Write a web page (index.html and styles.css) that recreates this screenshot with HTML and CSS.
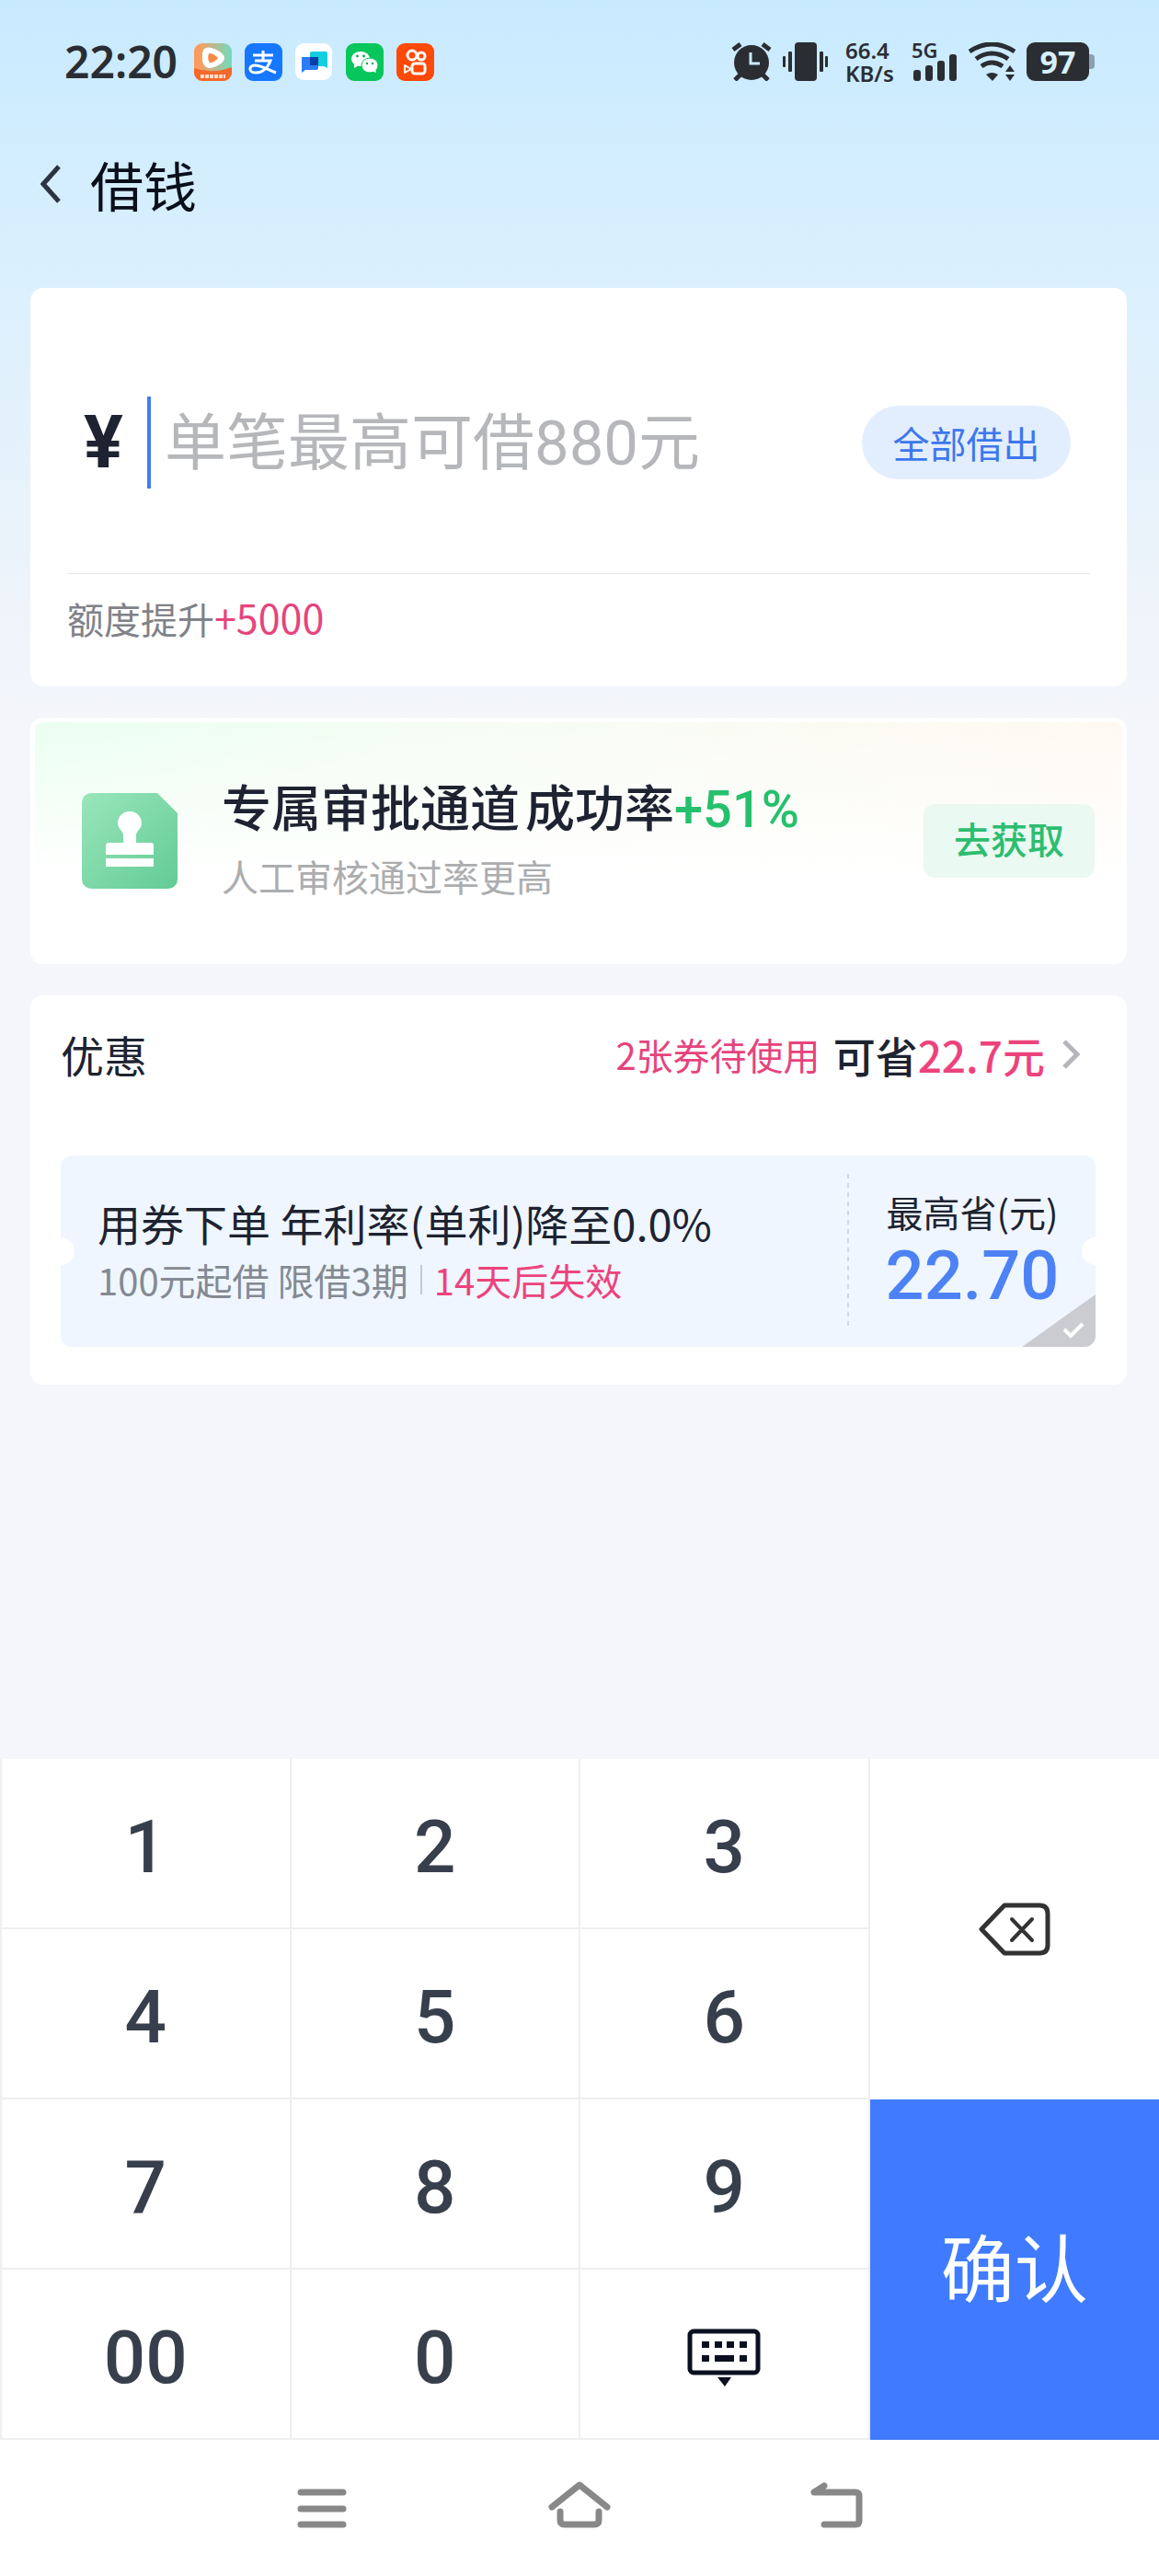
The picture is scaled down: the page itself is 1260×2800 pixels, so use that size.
FILE: index.html
```html
<!DOCTYPE html>
<html lang="zh-CN">
<head>
  <meta charset="UTF-8" />
  <meta name="viewport" content="width=device-width, initial-scale=1" />
  <title>借钱</title>
  <link rel="stylesheet" href="styles.css">
</head>
<body>

  <!-- 状态栏 -->
  <div class="status-bar">
    <div class="status-left">
      <span class="clock">22:20</span>
      <svg class="app-icon" viewBox="0 0 41 41">
        <defs>
          <linearGradient id="video" x1="0" y1="0" x2="1" y2="0">
            <stop offset="0.1" stop-color="#ff9a5c" />
            <stop offset="1" stop-color="#6fdcc0" />
          </linearGradient>
        </defs>
        <rect width="41" height="41" rx="9" fill="url(#video)" />
        <path d="M0 27Q20 34 41 26V32a9 9 0 0 1-9 9H9a9 9 0 0 1-9-9z" fill="#f4682c" />
        <path d="M11 6Q15 3 22 6Q33 11 33 16Q33 21 24 25Q16 29 12 25Q8 21 9 13Q9 8 11 6z" fill="#fff" />
        <path d="M16 11q5 0 9 4 2 2-1 3-4 4-7 3-3-4-1-10z" fill="#f98a45" />
        <path d="M7 36h27" stroke="#ffe0cc" stroke-width="4" stroke-dasharray="4 1" />
      </svg>
      <svg class="app-icon" viewBox="0 0 41 41">
        <rect width="41" height="41" rx="9" fill="#1677ff" />
        <path d="M20 8v11M9 13h22M11 19h17c-3 8-9 13-16 13-8 0-8-8-1-8 7 0 14 5 23 8" fill="none" stroke="#fff" stroke-width="3" />
      </svg>
      <svg class="app-icon" viewBox="0 0 41 41">
        <rect width="40" height="40" rx="9" fill="#fff" />
        <path d="M16 11q0-2 2-2h15q2 0 2 2v16l-4-2H16z" fill="#12cfe0" />
        <path d="M7 15h18v12q0 2-2 2H11l-4 3z" fill="#2d7bf5" />
        <path d="M16 15h9v9h-9z" fill="#0b3fa8" />
      </svg>
      <svg class="app-icon" viewBox="0 0 41 41">
        <rect width="41" height="41" rx="9" fill="#07c65b" />
        <ellipse cx="16" cy="17" rx="10" ry="8" fill="#fff" />
        <path d="M9 22v5l5-3z" fill="#fff" />
        <ellipse cx="26" cy="24" rx="9" ry="8" fill="#fff" stroke="#07c65b" stroke-width="1" />
        <path d="M28 30l5 2-1-4z" fill="#fff" />
        <g fill="#07a94d">
          <circle cx="12.500" cy="14" r="1.400" /><circle cx="19.500" cy="14" r="1.400" />
          <circle cx="23" cy="22" r="1.200" /><circle cx="29" cy="22" r="1.200" />
        </g>
      </svg>
      <svg class="app-icon" viewBox="0 0 41 41">
        <rect width="41" height="41" rx="9" fill="#ff4906" />
        <g fill="none" stroke="#fff" stroke-width="3">
          <circle cx="17" cy="13" r="5" />
          <circle cx="27" cy="14" r="4" />
          <rect x="17" y="22" width="14" height="11" rx="3" />
          <path d="M9 24v8l7-4z" stroke-width="2" stroke-linejoin="round" />
        </g>
      </svg>
    </div>

    <div class="status-right">
      <svg width="44" height="42" viewBox="0 0 44 42">
        <circle cx="22" cy="22" r="19" fill="#2a2e33" />
        <path d="M2 8l8-6M42 8l-8-6M4 41l7-7M40 41l-7-7" stroke="#2a2e33" stroke-width="5" />
        <path d="M21 11v12h10" fill="none" stroke="#cbeafe" stroke-width="3" />
      </svg>
      <svg class="vibrate" width="50" height="42" viewBox="0 0 50 42" fill="#2a2e33">
        <rect x="13" width="24" height="42" rx="4" />
        <rect x="0" y="15" width="3" height="12" rx="1" />
        <rect x="6" y="10" width="4" height="22" rx="1" />
        <rect x="40" y="10" width="4" height="22" rx="1" />
        <rect x="46" y="15" width="3" height="12" rx="1" />
      </svg>
      <div class="speed">
        <span>66.4</span>
        <span>KB/s</span>
      </div>
      <div class="signal">
        <span>5G</span>
        <svg width="50" height="42" viewBox="0 0 50 42" fill="#2a2e33">
          <rect x="2" y="30" width="8" height="12" rx="3" />
          <rect x="15" y="25" width="8" height="17" rx="3" />
          <rect x="28" y="20" width="8" height="22" rx="3" />
          <rect x="41" y="13" width="8" height="29" rx="3" />
        </svg>
      </div>
      <svg width="51" height="42" viewBox="0 0 51 42">
        <g fill="none" stroke="#2a2e33" stroke-width="5">
          <path d="M1 10Q25-6 50 10" />
          <path d="M8 18Q25 6 43 18" />
          <path d="M14 26Q25 18 37 26" />
        </g>
        <path d="M19 35q6-4 13 0l-6 7z" fill="#2a2e33" />
        <path d="M45 25l5 7H40zM45 42l5-7H40z" fill="#2a2e33" />
      </svg>
      <div class="battery">97</div>
    </div>
  </div>

  <!-- 标题 -->
  <header class="title-bar">
    <a href="#" class="back" aria-label="返回">
      <svg width="22" height="42" viewBox="0 0 22 42">
        <path d="M20 2L3 21l17 19" fill="none" stroke="#2b3442" stroke-width="5" />
      </svg>
    </a>
    <h1>借钱</h1>
  </header>

  <main>
    <!-- 借款金额 -->
    <section class="card amount-card">
      <div class="amount-row">
        <label for="amount" class="yen">¥</label>
        <span class="caret"></span>
        <input type="text" id="amount" class="amount-input" inputmode="none" placeholder="单笔最高可借880元" />
        <button type="button" class="all-btn">全部借出</button>
      </div>
      <p class="limit">额度提升<span>+5000</span></p>
    </section>

    <!-- 专属审批 -->
    <section class="card promo-card">
      <svg width="104" height="104" viewBox="0 0 104 104">
        <defs>
          <linearGradient id="doc" x1="0" y1="0" x2="1" y2="1">
            <stop offset="0" stop-color="#9ae6ba" />
            <stop offset="1" stop-color="#62cb96" />
          </linearGradient>
        </defs>
        <path d="M10 0H82L104 22V94a10 10 0 0 1-10 10H10A10 10 0 0 1 0 94V10A10 10 0 0 1 10 0z" fill="url(#doc)" />
        <path d="M52 20c8 0 13 6 13 13 0 6-6 8-6 13v8h16q3 0 3 3v10H26V57q0-3 3-3h16v-8c0-5-6-7-6-13 0-7 5-13 13-13z" fill="#fff" />
        <path d="M26 71h52v9H26z" fill="#fff" />
      </svg>
      <div class="promo-text">
        <h2><span>专属审批通道</span><span>成功率<em>+51%</em></span></h2>
        <p>人工审核通过率更高</p>
      </div>
      <button type="button" class="get-btn">去获取</button>
    </section>

    <!-- 优惠券 -->
    <section class="card coupon-card">
      <div class="coupon-head">
        <h2>优惠</h2>
        <a href="#">
          <span class="count">2张券待使用</span>
          <span class="save">可省<em>22.7元</em></span>
          <svg width="20" height="32" viewBox="0 0 20 32">
            <path d="M2 2l14 14L2 30" fill="none" stroke="#b4b6ba" stroke-width="5" />
          </svg>
        </a>
      </div>

      <div class="coupon">
        <label for="coupon" class="coupon-info">
          <span class="coupon-title">用券下单 年利率(单利)降至0.0%</span>
          <span class="coupon-desc">100元起借 限借3期<i></i><em>14天后失效</em></span>
        </label>
        <span class="dash"></span>
        <div class="coupon-value">
          <span>最高省(元)</span>
          <strong>22.70</strong>
        </div>
        <input type="checkbox" id="coupon" class="coupon-tick" />
        <svg class="tick" width="24" height="18" viewBox="0 0 24 18">
          <path d="M2 8l7 7L22 2" fill="none" stroke="#fff" stroke-width="4" />
        </svg>
      </div>
    </section>
  </main>

  <!-- 数字键盘 -->
  <div class="keypad">
    <button type="button">1</button>
    <button type="button">2</button>
    <button type="button">3</button>
    <button type="button" class="delete" aria-label="删除">
      <svg width="78" height="58" viewBox="0 0 78 58" fill="none" stroke="#333" stroke-linecap="round" stroke-linejoin="round">
        <path d="M28 3H66q9 0 9 9V46q0 9-9 9H28L3 29z" stroke-width="5" />
        <path d="M36 18l22 23M58 18L36 41" stroke-width="4" />
      </svg>
    </button>
    <button type="button">4</button>
    <button type="button">5</button>
    <button type="button">6</button>
    <button type="button">7</button>
    <button type="button">8</button>
    <button type="button">9</button>
    <button type="button" class="confirm">确认</button>
    <button type="button">00</button>
    <button type="button">0</button>
    <button type="button" aria-label="收起键盘">
      <svg width="80" height="64" viewBox="0 0 80 64" fill="#0b1020">
        <rect x="3" y="3" width="74" height="45" rx="4" fill="none" stroke="#0b1020" stroke-width="5" />
        <path d="M16 14h8v7h-8zM30 14h8v7h-8zM43 14h8v7h-8zM57 14h8v7h-8zM16 29h8v7h-8zM30 29h21v7H30zM57 29h8v7h-8zM33 53h15l-7 10z" />
      </svg>
    </button>
  </div>

  <!-- 系统导航 -->
  <nav>
    <button type="button" aria-label="菜单">
      <svg width="68" height="52" viewBox="0 0 68 52">
        <path d="M11 12h46M11 30h46M11 47h46" stroke="#888" stroke-width="7" stroke-linecap="round" />
      </svg>
    </button>
    <button type="button" aria-label="主页">
      <svg width="68" height="52" viewBox="0 0 68 52" fill="none" stroke="#888" stroke-width="7" stroke-linecap="round" stroke-linejoin="round">
        <path d="M4 28L34 4l30 24" />
        <path d="M13 33v9q0 5 5 5h32q5 0 5-5v-9" />
      </svg>
    </button>
    <button type="button" aria-label="返回">
      <svg width="68" height="52" viewBox="0 0 68 52" fill="none" stroke="#888" stroke-width="7" stroke-linecap="round" stroke-linejoin="round">
        <path d="M20 5L9 12H54q4 0 4 4V43q0 4-4 4H20" />
      </svg>
    </button>
  </nav>

</body>
</html>
```
FILE: styles.css
```css
* {
  box-sizing: border-box;
}

body {
  margin: 0;
  min-height: 100vh;
  display: flex;
  flex-direction: column;
  font-family: "Noto Sans CJK SC", sans-serif;
  color: #1d2330;
  background: #f5f6fb linear-gradient(#c8eaff 0, #dcf0fd 330px, #ebf3fa 600px, #f5f6fb 800px) no-repeat;
}

h1,
h2,
p {
  margin: 0;
  font-weight: 400;
}

em,
i {
  font-style: normal;
}

a {
  color: inherit;
  text-decoration: none;
}

button {
  border: none;
  padding: 0;
  background: none;
  font-family: inherit;
}

svg {
  display: block;
  flex-shrink: 0;
}

/* 状态栏 */
.status-bar {
  display: flex;
  justify-content: space-between;
  align-items: center;
  height: 134px;
  padding: 0 76px 0 70px;
  font-family: "Noto Sans", sans-serif;
  font-weight: 600;
  color: #2a2e33;
}

.status-left,
.status-right {
  display: flex;
  align-items: center;
}

.status-left {
  gap: 14px;
}

.status-right {
  gap: 12px;
}

.clock {
  margin-right: 4px;
  font-size: 48px;
  line-height: 48px;
}

.app-icon {
  width: 41px;
  height: 41px;
}

.vibrate {
  margin-right: 6px;
}

.speed {
  display: flex;
  flex-direction: column;
  width: 60px;
  font-size: 24px;
  line-height: 25px;
}

.signal {
  position: relative;
}

.signal span {
  position: absolute;
  top: -4px;
  left: 0;
  font-size: 22px;
  line-height: 24px;
}

.battery {
  position: relative;
  width: 68px;
  height: 42px;
  border-radius: 9px;
  background: #2a2e33;
  color: #d8effd;
  font-size: 34px;
  font-weight: 700;
  line-height: 42px;
  text-align: center;
}

.battery::after {
  content: "";
  position: absolute;
  right: -6px;
  top: 13px;
  width: 6px;
  height: 16px;
  border-radius: 0 4px 4px 0;
  background: #8ba0af;
}

/* 标题 */
.title-bar {
  display: flex;
  align-items: center;
  gap: 32px;
  height: 132px;
  padding-left: 44px;
}

.title-bar h1 {
  font-size: 58px;
  line-height: 80px;
  color: #0a0f1c;
}

main {
  flex: 1;
  display: flex;
  flex-direction: column;
  gap: 34px;
  padding: 47px 35px 40px 33px;
}

.card {
  background: #fff;
  border-radius: 14px;
}

/* 借款金额 */
.amount-card {
  padding: 118px 40px 50px;
}

.amount-row {
  display: flex;
  align-items: center;
  padding: 0 21px 92px 18px;
  border-bottom: 1px solid #e8e8ea;
}

.yen {
  width: 69px;
  font-family: Roboto, sans-serif;
  font-size: 80px;
  font-weight: 700;
  line-height: 100px;
}

.caret {
  width: 4px;
  height: 100px;
  margin-right: 15px;
  background: #437cf5;
}

.amount-input {
  flex: 1;
  min-width: 0;
  height: 100px;
  padding: 2px 0 0;
  border: none;
  outline: none;
  background: none;
  font-family: Roboto, "Noto Sans CJK SC", sans-serif;
  font-size: 67px;
  color: #1d2330;
}

.amount-input::placeholder {
  color: #b5b7ba;
  opacity: 1;
}

.all-btn {
  width: 227px;
  height: 80px;
  border-radius: 40px;
  background: #e2eefd;
  color: #3d77ee;
  font-size: 40px;
}

.limit {
  padding-top: 24px;
  font-size: 40px;
  line-height: 48px;
  color: #808287;
}

.limit span {
  font-size: 43px;
  line-height: 40px;
  color: #e6447c;
}

/* 专属审批 */
.promo-card {
  display: flex;
  align-items: center;
  height: 268px;
  padding: 0 30px 0 51px;
  border: 5px solid #fff;
  background:
    linear-gradient(rgba(255, 255, 255, 0), #fff 65%),
    linear-gradient(90deg, #eafff0, #f7fdf3 45%, #fff9f2);
}

.promo-text {
  flex: 1;
  padding-left: 48px;
}

.promo-text h2 {
  display: flex;
  gap: 6px;
  font-size: 54px;
  font-weight: 500;
  line-height: 80px;
}

.promo-text h2 em {
  font-family: Roboto, sans-serif;
  font-size: 56px;
  line-height: 60px;
  color: #26c06d;
}

.promo-text p {
  padding-bottom: 4px;
  font-size: 40px;
  line-height: 72px;
  color: #acadaf;
}

.get-btn {
  width: 186px;
  height: 80px;
  padding-bottom: 6px;
  border-radius: 12px;
  background: #eaf9f1;
  color: #2cbd70;
  font-size: 40px;
  font-weight: 500;
}

/* 优惠券 */
.coupon-card {
  padding: 34px 34px 41px 33px;
}

.coupon-head {
  display: flex;
  justify-content: space-between;
  padding-right: 16px;
  margin-bottom: 80px;
  line-height: 60px;
}

.coupon-head h2 {
  font-size: 47px;
}

.coupon-head a {
  display: flex;
  align-items: center;
}

.count {
  margin-right: 14px;
  font-size: 40px;
  color: #e6447c;
}

.save {
  margin-right: 19px;
  font-size: 46px;
  font-weight: 500;
}

.save em {
  color: #ed437d;
}

.coupon {
  position: relative;
  display: flex;
  align-items: center;
  height: 208px;
  border-radius: 12px;
  background: #eff6ff;
  overflow: hidden;
}

.coupon::before,
.coupon::after {
  content: "";
  position: absolute;
  top: 89px;
  width: 30px;
  height: 30px;
  border-radius: 50%;
  background: #fff;
}

.coupon::before {
  left: -15px;
}

.coupon::after {
  right: -15px;
}

.coupon-info {
  flex: 1;
  display: flex;
  flex-direction: column;
  padding-left: 40px;
  line-height: 62px;
}

.coupon-title {
  font-size: 47px;
}

.coupon-desc {
  display: flex;
  align-items: center;
  font-size: 40px;
  color: #848a92;
}

.coupon-desc i {
  width: 2px;
  height: 32px;
  margin: 0 13px;
  background: #c3c8cf;
}

.coupon-desc em {
  color: #ed437d;
}

.dash {
  width: 2px;
  height: 168px;
  background: repeating-linear-gradient(#cfd6de 0, #cfd6de 5px, transparent 5px, transparent 10px);
}

.coupon-value {
  display: flex;
  flex-direction: column;
  align-items: center;
  width: 268px;
  padding-bottom: 8px;
  font-size: 40px;
  line-height: 62px;
}

.coupon-value strong {
  font-family: Roboto, sans-serif;
  font-size: 74px;
  font-weight: 500;
  line-height: 78px;
  color: #4d82f5;
}

.coupon-tick {
  appearance: none;
  position: absolute;
  right: 0;
  bottom: 0;
  width: 80px;
  height: 57px;
  margin: 0;
  background: #cbccd1;
  clip-path: polygon(100% 0, 100% 100%, 0 100%);
}

.coupon-tick:checked {
  background: #437cf5;
}

.tick {
  position: absolute;
  right: 12px;
  bottom: 9px;
  pointer-events: none;
}

/* 数字键盘 */
.keypad {
  display: grid;
  grid-template-columns: repeat(4, 1fr);
  grid-auto-rows: 185px;
  background: #fff;
  border-left: 2px solid #efeff0;
}

.keypad button {
  display: flex;
  align-items: center;
  justify-content: center;
  padding-top: 8px;
  border-right: 2px solid #efeff0;
  border-bottom: 2px solid #efeff0;
  font-family: Roboto, "Noto Sans CJK SC", sans-serif;
  font-size: 80px;
  font-weight: 500;
  color: #383f4c;
}

.keypad .delete,
.keypad .confirm {
  grid-column: 4;
  grid-row: span 2;
  border: none;
}

.keypad .delete {
  grid-row: 1 / span 2;
  padding: 0;
}

.keypad .confirm {
  grid-row: 3 / span 2;
  padding: 0 0 12px;
  background: #407bff;
  font-weight: 400;
  color: #fff;
}

/* 系统导航 */
nav {
  display: flex;
  justify-content: center;
  gap: 212px;
  height: 148px;
  padding-top: 45px;
  background: #fff;
}

nav button {
  height: 52px;
}
```
